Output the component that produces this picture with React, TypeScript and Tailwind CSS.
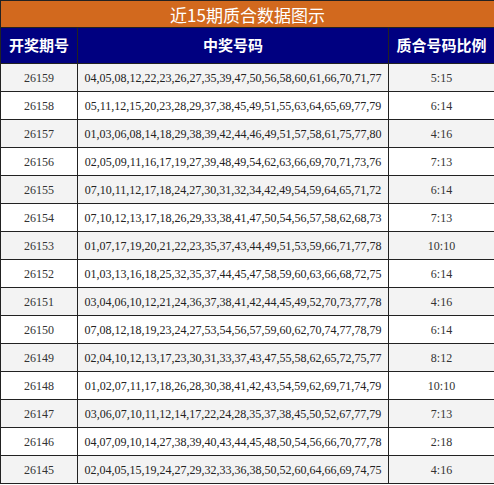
const rows: [string, string, string][] = [
  ["26159", "04,05,08,12,22,23,26,27,35,39,47,50,56,58,60,61,66,70,71,77", "5:15"],
  ["26158", "05,11,12,15,20,23,28,29,37,38,45,49,51,55,63,64,65,69,77,79", "6:14"],
  ["26157", "01,03,06,08,14,18,29,38,39,42,44,46,49,51,57,58,61,75,77,80", "4:16"],
  ["26156", "02,05,09,11,16,17,19,27,39,48,49,54,62,63,66,69,70,71,73,76", "7:13"],
  ["26155", "07,10,11,12,17,18,24,27,30,31,32,34,42,49,54,59,64,65,71,72", "6:14"],
  ["26154", "07,10,12,13,17,18,26,29,33,38,41,47,50,54,56,57,58,62,68,73", "7:13"],
  ["26153", "01,07,17,19,20,21,22,23,35,37,43,44,49,51,53,59,66,71,77,78", "10:10"],
  ["26152", "01,03,13,16,18,25,32,35,37,44,45,47,58,59,60,63,66,68,72,75", "6:14"],
  ["26151", "03,04,06,10,12,21,24,36,37,38,41,42,44,45,49,52,70,73,77,78", "4:16"],
  ["26150", "07,08,12,18,19,23,24,27,53,54,56,57,59,60,62,70,74,77,78,79", "6:14"],
  ["26149", "02,04,10,12,13,17,23,30,31,33,37,43,47,55,58,62,65,72,75,77", "8:12"],
  ["26148", "01,02,07,11,17,18,26,28,30,38,41,42,43,54,59,62,69,71,74,79", "10:10"],
  ["26147", "03,06,07,10,11,12,14,17,22,24,28,35,37,38,45,50,52,67,77,79", "7:13"],
  ["26146", "04,07,09,10,14,27,38,39,40,43,44,45,48,50,54,56,66,70,77,78", "2:18"],
  ["26145", "02,04,05,15,19,24,27,29,32,33,36,38,50,52,60,64,66,69,74,75", "4:16"],
];

export default function App() {
  return (
    <div className="w-[494px] bg-white font-['Liberation_Serif','Noto_Sans_CJK_SC',serif]">
      <table className="w-full border-collapse border border-[#222] table-fixed">
        <colgroup>
          <col className="w-[77px]" />
          <col className="w-[311px]" />
          <col className="w-[106px]" />
        </colgroup>
        <thead>
          <tr>
            <th
              colSpan={3}
              className="h-[27px] bg-[#d2691e] border border-[#222] text-white text-[17px] font-normal leading-none font-['Noto_Sans_CJK_SC',sans-serif]"
            >
              近15期质合数据图示
            </th>
          </tr>
          <tr className="bg-[#000080] text-white">
            <th className="h-[36px] border border-[#222] text-[15px] font-bold font-['Noto_Sans_CJK_SC',sans-serif]">
              开奖期号
            </th>
            <th className="border border-[#222] text-[15px] font-bold font-['Noto_Sans_CJK_SC',sans-serif]">
              中奖号码
            </th>
            <th className="border border-[#222] text-[15px] font-bold font-['Noto_Sans_CJK_SC',sans-serif]">
              质合号码比例
            </th>
          </tr>
        </thead>
        <tbody>
          {rows.map(([issue, nums, ratio], i) => (
            <tr key={issue} className={i % 2 === 0 ? "bg-[#f3f3f3]" : "bg-white"}>
              <td className="h-[28px] border border-[#222] text-center text-[12px] text-[#333]">{issue}</td>
              <td className="border border-[#222] text-center text-[12px] text-[#222] whitespace-nowrap">{nums}</td>
              <td className="border border-[#222] text-center text-[12px] text-[#333]">{ratio}</td>
            </tr>
          ))}
        </tbody>
      </table>
    </div>
  );
}
